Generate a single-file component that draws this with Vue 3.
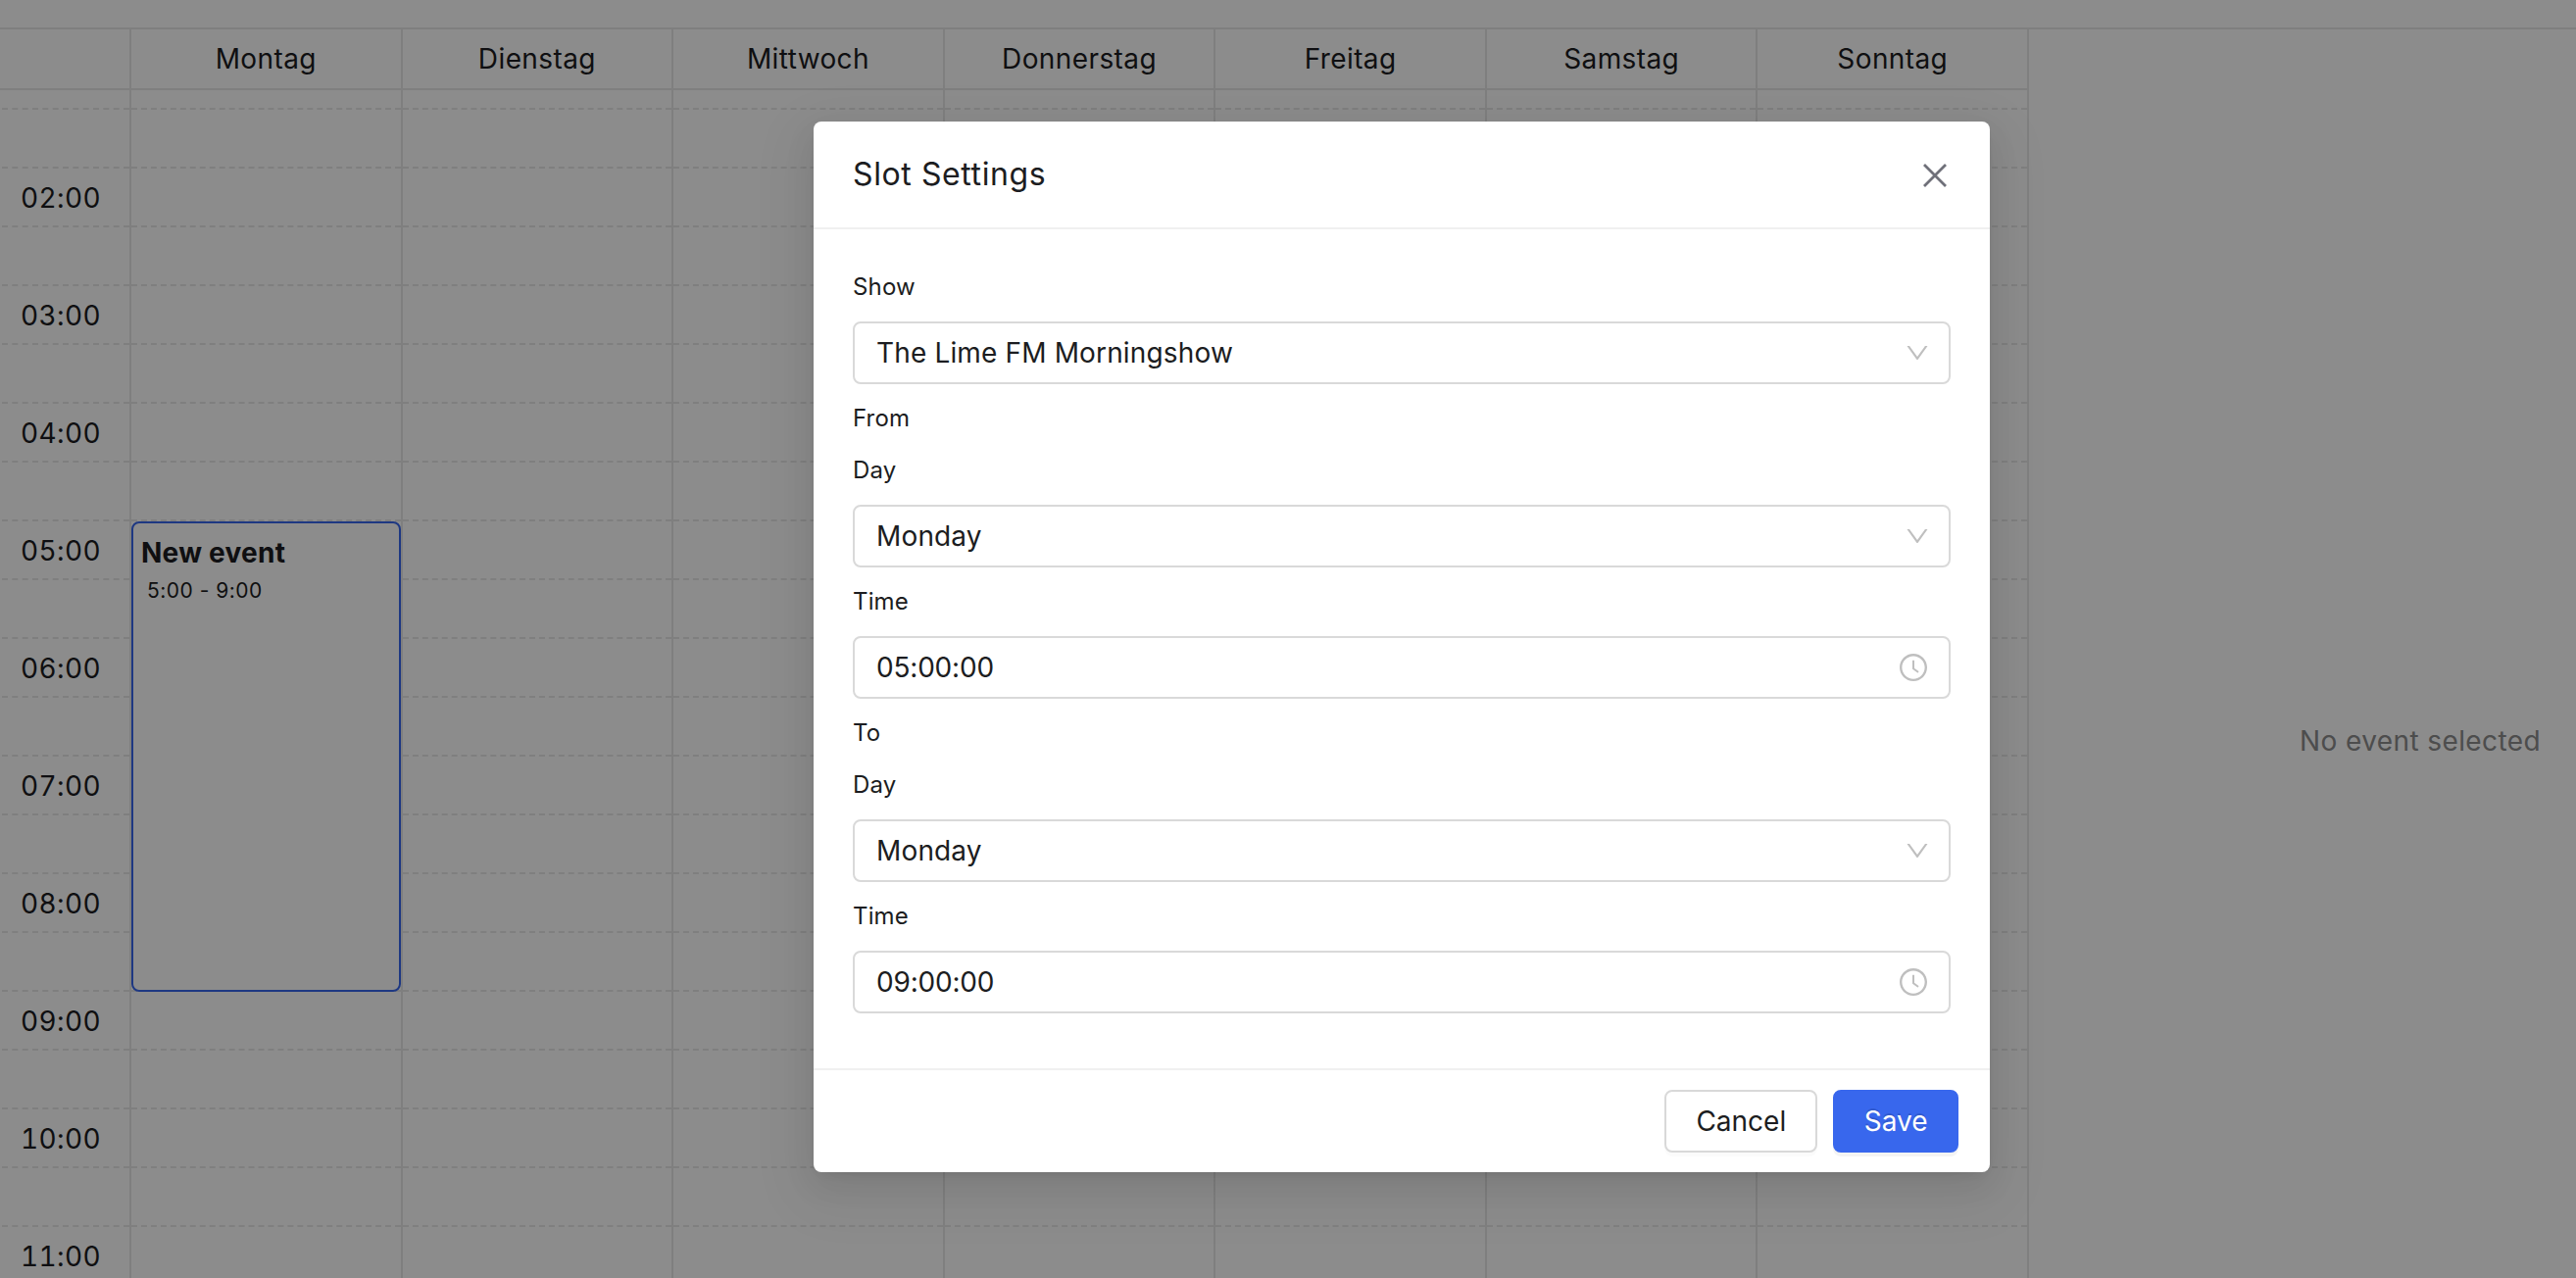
<template>
  <div class="app">
    <div class="topbar"></div>
    <div class="workspace">
      <div class="calendar">
        <div class="calendar-header">
          <div class="gutter-head"></div>
          <div v-for="day in days" :key="day" class="day-head">{{ day }}</div>
        </div>
        <div class="calendar-scroll">
          <div class="gutter">
            <div v-for="(slot, i) in slots" :key="i" class="slot gutter-slot">{{ slot }}</div>
          </div>
          <div v-for="day in days" :key="day" class="day-column">
            <div v-for="(slot, i) in slots" :key="i" class="slot"></div>
            <div v-if="day === 'Montag'" class="event">
              <div class="event-title">New event</div>
              <div class="event-time">5:00 - 9:00</div>
            </div>
          </div>
        </div>
      </div>
      <aside class="details">No event selected</aside>
    </div>

    <div class="mask">
      <div class="modal" role="dialog">
        <header class="modal-header">
          <span class="modal-title">Slot Settings</span>
          <svg class="icon-close" viewBox="0 0 24 24">
            <path d="M1 1L23 23M23 1L1 23" />
          </svg>
        </header>
        <div class="modal-body">
          <template v-for="(item, i) in form" :key="i">
            <div class="label">{{ item.label }}</div>
            <div v-if="item.value" class="control" :class="item.type">
              <span>{{ item.value }}</span>
              <svg v-if="item.type === 'select'" class="icon-down" viewBox="0 0 1024 1024">
                <path d="M884 256h-75c-5.1 0-9.9 2.5-12.9 6.6L512 654.2 227.9 262.6c-3-4.1-7.8-6.6-12.9-6.6h-75c-6.5 0-10.3 7.4-6.5 12.7l352.6 486.1c12.8 17.6 39 17.6 51.7 0l352.6-486.1c3.9-5.3.1-12.7-6.4-12.7z" />
              </svg>
              <svg v-else class="icon-clock" viewBox="0 0 1024 1024">
                <path d="M512 64C264.6 64 64 264.6 64 512s200.6 448 448 448 448-200.6 448-448S759.4 64 512 64zm0 820c-205.4 0-372-166.6-372-372s166.6-372 372-372 372 166.6 372 372-166.6 372-372 372z" />
                <path d="M686.7 638.6L544.1 535.5V288c0-4.4-3.6-8-8-8H488c-4.4 0-8 3.6-8 8v275.4c0 2.6 1.2 5 3.3 6.5l165.4 120.6c3.6 2.6 8.6 1.8 11.2-1.7l28.6-39c2.6-3.7 1.8-8.7-1.8-11.2z" />
              </svg>
            </div>
          </template>
        </div>
        <footer class="modal-footer">
          <button class="btn">Cancel</button>
          <button class="btn btn-primary">Save</button>
        </footer>
      </div>
    </div>
  </div>
</template>

<script setup>
import { ref } from 'vue'

const days = ['Montag', 'Dienstag', 'Mittwoch', 'Donnerstag', 'Freitag', 'Samstag', 'Sonntag']

// two half-hour slots per hour, only the first one is labelled
const slots = []
for (let hour = 1; hour <= 11; hour++) {
  slots.push(`${String(hour).padStart(2, '0')}:00`, '')
}

const form = ref([
  { label: 'Show', type: 'select', value: 'The Lime FM Morningshow' },
  { label: 'From' },
  { label: 'Day', type: 'select', value: 'Monday' },
  { label: 'Time', type: 'time', value: '05:00:00' },
  { label: 'To' },
  { label: 'Day', type: 'select', value: 'Monday' },
  { label: 'Time', type: 'time', value: '09:00:00' }
])
</script>

<style>
body {
  margin: 0;
  overflow: hidden;
}
</style>

<style scoped>
.app {
  height: 100vh;
  display: flex;
  flex-direction: column;
  overflow: hidden;
  background: #fff;
  color: #1c1d21;
  font-family: Inter, "Liberation Sans", sans-serif;
  font-size: 28px;
  position: relative;
}

.topbar {
  height: 28px;
  flex-shrink: 0;
  border-bottom: 2px solid #e8e8e8;
}

.workspace {
  flex: 1;
  min-height: 0;
  display: flex;
  letter-spacing: 0.4px;
}

.calendar {
  width: 2070px;
  flex-shrink: 0;
  display: flex;
  flex-direction: column;
}

.calendar-header {
  display: flex;
  height: 60px;
  flex-shrink: 0;
  border-bottom: 2px solid #e8e8e8;
}

.gutter-head,
.gutter {
  width: 134px;
  flex-shrink: 0;
  box-sizing: border-box;
  border-right: 2px solid #e8e8e8;
}

.gutter {
  padding-left: 2px;
}

.day-head,
.day-column {
  flex: 1;
  min-width: 0;
  border-right: 2px solid #e8e8e8;
}

.day-head {
  display: flex;
  align-items: center;
  justify-content: center;
}

.calendar-scroll {
  flex: 1;
  min-height: 0;
  display: flex;
  align-items: flex-start;
  overflow: hidden;
}

.gutter,
.day-column {
  margin-top: -40px;
  position: relative;
}

.slot {
  height: 60px;
  box-sizing: border-box;
  border-bottom: 2px dashed #e8e8e8;
}

.gutter-slot {
  display: flex;
  align-items: center;
  justify-content: flex-end;
  padding: 2px 29px 0 0;
  font-variant-numeric: tabular-nums;
  letter-spacing: 0.35px;
}

.event {
  position: absolute;
  top: 480px;
  left: 0;
  right: 0;
  height: 480px;
  box-sizing: border-box;
  padding: 8px;
  border: 2px solid #3867ed;
  border-radius: 8px;
  background: #fff;
}

.event-title {
  font-weight: 700;
  line-height: 44px;
  letter-spacing: 0.25px;
}

.event-time {
  padding-left: 6px;
  font-size: 21px;
  line-height: 33px;
  letter-spacing: 0.5px;
}

.details {
  flex: 1;
  display: flex;
  align-items: center;
  justify-content: flex-end;
  padding: 177px 36px 0 0;
  color: #8c8c8c;
}

.mask {
  position: absolute;
  inset: 0;
  display: flex;
  align-items: flex-start;
  justify-content: center;
  padding: 124px 0 0 232px;
  background: rgba(0, 0, 0, 0.45);
}

.modal {
  width: 1200px;
  border-radius: 8px;
  background: #fff;
  box-shadow: 0 6px 12px -8px rgba(0, 0, 0, 0.12), 0 12px 32px rgba(0, 0, 0, 0.08), 0 18px 56px 16px rgba(0, 0, 0, 0.05);
}

.modal-header {
  height: 108px;
  display: flex;
  align-items: center;
  justify-content: space-between;
  padding: 0 44px 0 40px;
  border-bottom: 2px solid #f0f0f0;
}

.modal-title {
  padding-bottom: 2px;
  font-size: 32px;
  letter-spacing: 0.6px;
}

.modal-body {
  padding: 40px;
}

.label {
  height: 53.7px;
  font-size: 24px;
  line-height: 37.7px;
  letter-spacing: 0.15px;
}

.control {
  height: 64px;
  box-sizing: border-box;
  display: flex;
  align-items: center;
  justify-content: space-between;
  margin-bottom: 16px;
  padding: 0 22px;
  border: 2px solid #d9d9d9;
  border-radius: 8px;
}

.control.select {
  letter-spacing: 0.15px;
}

.control.time {
  letter-spacing: -0.2px;
}

.icon-close {
  width: 24px;
  height: 24px;
  margin-top: 2px;
  fill: none;
  stroke: #6f7079;
  stroke-width: 2.8;
}

.icon-down {
  width: 28px;
  height: 28px;
  margin-right: -4px;
  fill: #bfbfbf;
}

.icon-clock {
  width: 32px;
  height: 32px;
  margin-right: -2px;
  fill: #bfbfbf;
}

.modal-footer {
  display: flex;
  justify-content: flex-end;
  gap: 16px;
  padding: 20px 32px;
  border-top: 2px solid #f0f0f0;
}

.btn {
  height: 64px;
  padding: 0 30px;
  border: 2px solid #d9d9d9;
  border-radius: 8px;
  background: #fff;
  box-shadow: 0 4px 0 rgba(0, 0, 0, 0.016);
  color: inherit;
  font: inherit;
}

.btn-primary {
  padding: 0 29.5px;
  border-color: #3867ed;
  background: #3867ed;
  box-shadow: 0 4px 0 rgba(0, 0, 0, 0.045);
  color: #fff;
  text-shadow: 0 -2px 0 rgba(0, 0, 0, 0.12);
}
</style>
